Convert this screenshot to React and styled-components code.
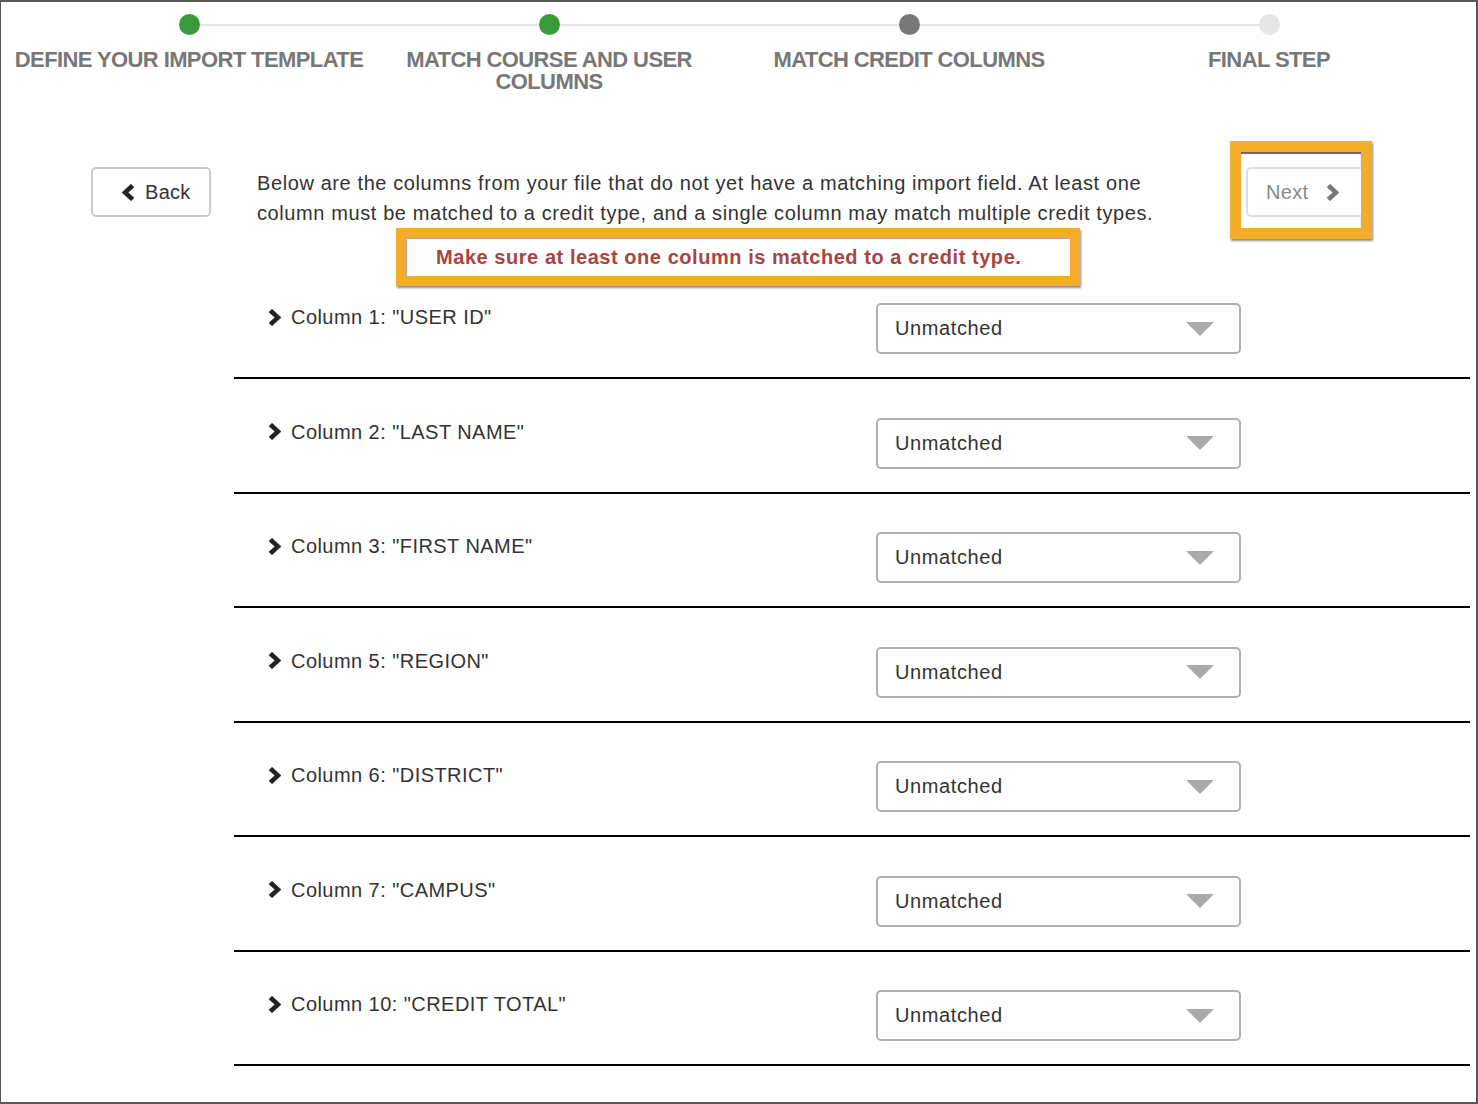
import React from "react";
import styled, { createGlobalStyle } from "styled-components";

const GlobalStyle = createGlobalStyle`
  html, body {
    margin: 0;
    padding: 0;
    background: #ffffff;
  }
  body {
    font-family: "Liberation Sans", Arial, Helvetica, sans-serif;
    color: #333333;
  }
  * {
    box-sizing: border-box;
  }
`;

const Frame = styled.div`
  width: 1478px;
  height: 1104px;
  border: 2px solid #55595d;
  border-left-width: 1px;
  background: #ffffff;
  overflow: hidden;
`;

const Stepper = styled.div`
  display: grid;
  grid-template-columns: repeat(4, 360px);
  padding: 12px 0 0 8px;
`;

const Step = styled.div`
  display: flex;
  flex-direction: column;
  align-items: center;
`;

const DotTrack = styled.div`
  position: relative;
  width: 100%;
  height: 21px;
  display: flex;
  justify-content: center;

  &::after {
    content: "";
    display: ${(p) => (p.$last ? "none" : "block")};
    position: absolute;
    top: 10px;
    left: 50%;
    width: 100%;
    height: 2px;
    background: #e6e6e6;
  }
`;

const Dot = styled.span`
  position: relative;
  z-index: 1;
  width: 21px;
  height: 21px;
  border-radius: 50%;
  background: ${(p) =>
    p.$state === "done" ? "#3a9a3a" : p.$state === "current" ? "#787878" : "#e6e6e6"};
`;

const StepLabel = styled.div`
  margin-top: 14px;
  font-size: 22px;
  line-height: 22px;
  font-weight: 700;
  letter-spacing: -0.6px;
  color: #777777;
  text-align: center;
  text-transform: uppercase;
`;

const TopSection = styled.div`
  display: flex;
  align-items: flex-start;
  margin-top: 48px;
  padding-left: 90px;
`;

const BackButton = styled.button`
  display: flex;
  align-items: center;
  gap: 10px;
  width: 120px;
  height: 50px;
  margin-top: 26px;
  padding: 0 0 0 28px;
  border: 2px solid #cccccc;
  border-radius: 5px;
  background: #ffffff;
  color: #333333;
  font-family: inherit;
  font-size: 20px;
  letter-spacing: 0.3px;
  cursor: pointer;
`;

const IntroColumn = styled.div`
  width: 920px;
  margin-left: 46px;
  margin-top: 27px;
`;

const Intro = styled.p`
  margin: 0;
  width: 915px;
  font-size: 20px;
  letter-spacing: 0.6px;
  line-height: 30px;
  color: #333333;
`;

const Highlight = styled.div`
  border: ${(p) => p.$width || 10}px solid #f4ad2b;
  box-shadow: 1px 2px 2px rgba(0, 0, 0, 0.45);
  background: #ffffff;
`;

const ErrorBox = styled(Highlight)`
  width: 684px;
  margin-left: 139px;
`;

const ErrorInner = styled.div`
  height: 38px;
  padding-left: 30px;
  box-shadow: inset 1px 1px 1px rgba(0, 0, 0, 0.35);
  color: #a94442;
  font-size: 20px;
  font-weight: 700;
  letter-spacing: 0.55px;
  line-height: 38px;
  white-space: nowrap;
`;

const NextBox = styled(Highlight)`
  width: 142px;
  margin-left: 53px;
  overflow: hidden;
`;

const NextInner = styled.div`
  padding: 15px 0 11px 5px;
  box-shadow: inset 0 2px 1px rgba(0, 0, 0, 0.6);
`;

const NextButton = styled.button`
  display: flex;
  align-items: center;
  gap: 18px;
  width: 124px;
  height: 50px;
  padding: 0 0 0 18px;
  border: 2px solid #dddddd;
  border-radius: 5px;
  background: #ffffff;
  color: #888888;
  font-family: inherit;
  font-size: 20px;
  letter-spacing: 0.3px;
  cursor: not-allowed;
`;

const Rows = styled.div`
  margin: 0 6px 0 233px;
`;

const Row = styled.div`
  display: grid;
  grid-template-columns: 608px 365px;
  align-items: start;
  padding: 38.5px 0 23px 34px;
  border-bottom: 2px solid #000000;

  &:first-child {
    padding-top: 17px;
  }
`;

const ColumnName = styled.div`
  display: flex;
  align-items: center;
  gap: 9px;
  font-size: 20px;
  letter-spacing: 0.45px;
  line-height: 28px;
  color: #333333;
`;

const Select = styled.div`
  display: flex;
  align-items: center;
  justify-content: space-between;
  height: 51px;
  padding: 0 25px 0 17px;
  border: 2px solid #b0b0b0;
  border-radius: 5px;
  font-size: 20px;
  letter-spacing: 0.6px;
  color: #333333;
  cursor: pointer;
`;

const Caret = styled.span`
  width: 0;
  height: 0;
  border-left: 14px solid transparent;
  border-right: 14px solid transparent;
  border-top: 14px solid #aaaaaa;
`;

function Chevron({ dir = "right", color = "#222", width = 14, height = 17 }) {
  const points =
    dir === "right"
      ? "0.5,3.2 3.5,0.2 12.5,8.5 3.5,16.8 0.5,13.8 6.5,8.5"
      : "12.5,3.2 9.5,0.2 0.5,8.5 9.5,16.8 12.5,13.8 6.5,8.5";
  return (
    <svg width={width} height={height} viewBox="0 0 13 17" aria-hidden="true">
      <polygon points={points} fill={color} stroke={color} strokeWidth="0.6" strokeLinejoin="round" />
    </svg>
  );
}

const steps = [
  { label: "Define your import template", state: "done" },
  { label: "Match course and user columns", state: "done" },
  { label: "Match credit columns", state: "current" },
  { label: "Final step", state: "todo" },
];

const columns = [
  'Column 1: "USER ID"',
  'Column 2: "LAST NAME"',
  'Column 3: "FIRST NAME"',
  'Column 5: "REGION"',
  'Column 6: "DISTRICT"',
  'Column 7: "CAMPUS"',
  'Column 10: "CREDIT TOTAL"',
];

export default function App() {
  return (
    <>
      <GlobalStyle />
      <Frame>
        <Stepper>
          {steps.map((s, i) => (
            <Step key={s.label}>
              <DotTrack $last={i === steps.length - 1}>
                <Dot $state={s.state} />
              </DotTrack>
              <StepLabel>{s.label}</StepLabel>
            </Step>
          ))}
        </Stepper>

        <TopSection>
          <BackButton>
            <Chevron dir="left" color="#222" />
            Back
          </BackButton>

          <IntroColumn>
            <Intro>
              Below are the columns from your file that do not yet have a matching import field. At
              least one column must be matched to a credit type, and a single column may match
              multiple credit types.
            </Intro>
            <ErrorBox $width={10}>
              <ErrorInner>Make sure at least one column is matched to a credit type.</ErrorInner>
            </ErrorBox>
          </IntroColumn>

          <NextBox $width={11}>
            <NextInner>
              <NextButton>
                Next
                <Chevron dir="right" color="#777" />
              </NextButton>
            </NextInner>
          </NextBox>
        </TopSection>

        <Rows>
          {columns.map((name) => (
            <Row key={name}>
              <ColumnName>
                <Chevron dir="right" color="#222" />
                {name}
              </ColumnName>
              <Select>
                Unmatched
                <Caret />
              </Select>
            </Row>
          ))}
        </Rows>
      </Frame>
    </>
  );
}
